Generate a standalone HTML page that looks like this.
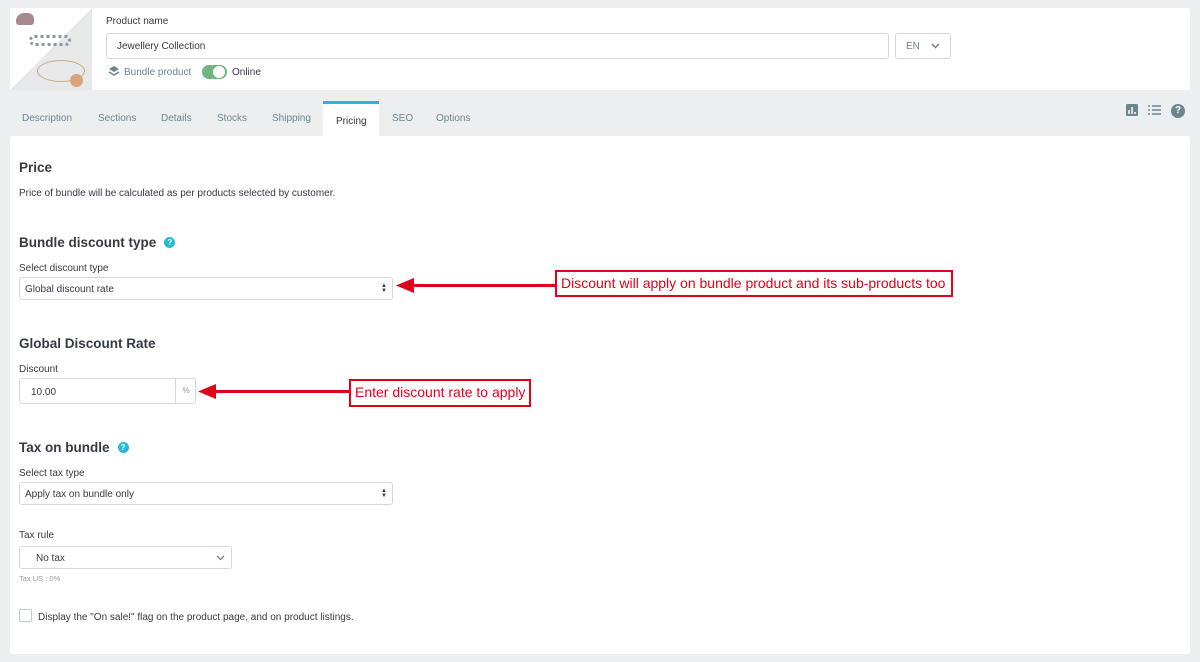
<!DOCTYPE html>
<html><head><meta charset="utf-8"><style>
*{box-sizing:border-box;margin:0;padding:0}
body{width:1200px;height:662px;background:#eceeef;font-family:"Liberation Sans",sans-serif;color:#363a41;position:relative;overflow:hidden;font-size:10px}
.abs{position:absolute}
.card{background:#fff;border-radius:3px}
.inp{position:absolute;border:1px solid #d4d8db;border-radius:3px;background:#fff;font-size:10px;color:#363a41;white-space:nowrap}
.lbl{position:absolute;font-size:10px;color:#363a41;white-space:nowrap}
h2{position:absolute;font-size:13.5px;font-weight:bold;color:#363a41}
.help{display:inline-block;width:11px;height:11px;border-radius:50%;background:#25b9d7;color:#fff;font-size:8px;text-align:center;line-height:11px;vertical-align:2px;margin-left:8px;font-weight:bold}
.tab{position:absolute;top:113px;font-size:10px;color:#6c868e}
.ann{position:absolute;border:2.5px solid #e3001b;background:#fff;color:#e3001b;font-size:14px;line-height:22px;padding:0 4px;white-space:nowrap}
.updn{position:absolute;right:5px;top:6px;font-size:6px;line-height:5px;color:#363a41}
</style></head><body>
<div class="card abs" style="left:10px;top:8px;width:1180px;height:82px"></div>
<svg class="abs" style="left:10px;top:8px" width="82" height="82"><rect width="82" height="82" fill="#fff"/><path d="M82 0V82H0Z" fill="#e6e8ea"/></svg>
<div class="abs" style="left:16px;top:13px;width:18px;height:12px;border-radius:8px 6px 3px 3px;background:#a88a8e"></div>
<div class="abs" style="left:29px;top:35px;width:42px;height:11px;border:3px dotted #8c98a4;border-radius:6px"></div>
<div class="abs" style="left:37px;top:60px;width:48px;height:22px;border:1.5px solid #c9a97f;border-radius:50%"></div>
<div class="abs" style="left:70px;top:74px;width:13px;height:13px;background:#d9a47c;border-radius:50%"></div>
<div class="lbl" style="left:106px;top:16px">Product name</div>
<div class="inp" style="left:106px;top:33px;width:783px;height:26px;padding:7px 10px">Jewellery Collection</div>
<div class="inp" style="left:895px;top:33px;width:56px;height:26px;padding:7px 10px;color:#6c868e">EN</div>
<svg class="abs" style="left:931px;top:43px" width="9" height="6"><path d="M1 1L4.5 4.5L8 1" stroke="#6c868e" stroke-width="1.5" fill="none"/></svg>
<svg class="abs" style="left:108px;top:65px" width="12" height="13" viewBox="0 0 12 13"><path d="M6 1L11 4L6 7L1 4Z" fill="#6c868e"/><path d="M1 7L6 10L11 7" stroke="#6c868e" stroke-width="1.6" fill="none"/></svg>
<div class="lbl" style="left:124px;top:67px;color:#6c868e">Bundle product</div>
<div class="abs" style="left:202px;top:65px;width:25px;height:14px;border-radius:7px;background:#70b580"></div>
<div class="abs" style="left:213px;top:66px;width:12px;height:12px;border-radius:50%;background:#fff"></div>
<div class="lbl" style="left:232px;top:67px">Online</div>

<div class="tab" style="left:22px">Description</div>
<div class="tab" style="left:98px">Sections</div>
<div class="tab" style="left:161px">Details</div>
<div class="tab" style="left:217px">Stocks</div>
<div class="tab" style="left:272px">Shipping</div>
<div class="abs" style="left:323px;top:101px;width:56px;height:36px;background:#fff;border-top:3px solid #25b9d7"></div>
<div class="tab" style="left:336px;top:116px;color:#363a41">Pricing</div>
<div class="tab" style="left:392px">SEO</div>
<div class="tab" style="left:436px">Options</div>
<svg class="abs" style="left:1126px;top:104px" width="12" height="12"><rect width="12" height="12" rx="1" fill="#6c868e"/><path d="M3 10V6M6 10V3M9 10V8" stroke="#fff" stroke-width="1.5"/></svg>
<svg class="abs" style="left:1148px;top:105px" width="13" height="10"><path d="M0 1h2M0 5h2M0 9h2M4 1h9M4 5h9M4 9h9" stroke="#6c868e" stroke-width="1.5"/></svg>
<div class="abs" style="left:1171px;top:104px;width:14px;height:14px;border-radius:50%;background:#6c868e;color:#fff;font-size:10px;font-weight:bold;text-align:center;line-height:14px">?</div>

<div class="card abs" style="left:10px;top:136px;width:1180px;height:518px"></div>
<h2 style="left:19px;top:160px">Price</h2>
<div class="lbl" style="left:19px;top:188px">Price of bundle will be calculated as per products selected by customer.</div>
<h2 style="left:19px;top:235px">Bundle discount type<span class="help">?</span></h2>
<div class="lbl" style="left:19px;top:263px">Select discount type</div>
<div class="inp" style="left:19px;top:277px;width:374px;height:23px;padding:6px 5px">Global discount rate<span class="updn">▲<br>▼</span></div>
<h2 style="left:19px;top:336px">Global Discount Rate</h2>
<div class="lbl" style="left:19px;top:364px">Discount</div>
<div class="inp" style="left:19px;top:378px;width:177px;height:26px;padding:8px 11px">10.00<span class="abs" style="left:155px;top:0;width:21px;height:24px;border-left:1px solid #d4d8db;color:#999;font-size:8px;text-align:center;line-height:24px">%</span></div>
<h2 style="left:19px;top:440px">Tax on bundle<span class="help">?</span></h2>
<div class="lbl" style="left:19px;top:468px">Select tax type</div>
<div class="inp" style="left:19px;top:482px;width:374px;height:23px;padding:6px 5px">Apply tax on bundle only<span class="updn">▲<br>▼</span></div>
<div class="lbl" style="left:19px;top:530px">Tax rule</div>
<div class="inp" style="left:19px;top:546px;width:213px;height:23px;padding:6px 16px">No tax</div>
<svg class="abs" style="left:216px;top:555px" width="9" height="6"><path d="M1 1L4.5 4.5L8 1" stroke="#6c868e" stroke-width="1.3" fill="none"/></svg>
<div class="lbl" style="left:19px;top:574px;font-size:7.5px;color:#999">Tax US : 0%</div>
<div class="abs" style="left:19px;top:609px;width:13px;height:13px;border:1px solid #bbcdd2;border-radius:2px"></div>
<div class="lbl" style="left:38px;top:612px">Display the "On sale!" flag on the product page, and on product listings.</div>

<div class="abs" style="left:410px;top:284px;width:146px;height:3px;background:#e3001b"></div>
<svg class="abs" style="left:396px;top:278px" width="18" height="15"><path d="M0 7.5L18 0V15Z" fill="#e3001b"/></svg>
<div class="ann" style="left:555px;top:270px;width:398px;height:27px">Discount will apply on bundle product and its sub-products too</div>
<div class="abs" style="left:212px;top:390px;width:138px;height:3px;background:#e3001b"></div>
<svg class="abs" style="left:198px;top:384px" width="18" height="15"><path d="M0 7.5L18 0V15Z" fill="#e3001b"/></svg>
<div class="ann" style="left:349px;top:379px;width:182px;height:28px">Enter discount rate to apply</div>
</body></html>
